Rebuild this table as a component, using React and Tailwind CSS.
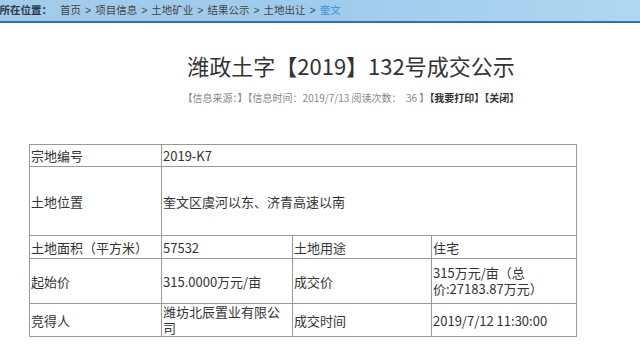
import React from 'react';

const crumbs = ['首页', '项目信息', '土地矿业', '结果公示', '土地出让'];

export default function App() {
  const cell = 'border border-[#999] px-[1px] align-middle text-left';
  return (
    <div className="w-[640px] h-[364px] overflow-hidden bg-white text-[#333]" style={{ fontFamily: '"Noto Sans CJK SC", "Noto Sans", sans-serif' }}>
      <div
        className="h-[23px] bg-gradient-to-r from-[#a3cbe9] via-[#9fcbec] to-[#b1d7f0] border-b-2 border-[#2d6fb8] flex items-center text-[10.5px] whitespace-nowrap"
        style={{ fontFamily: '"Liberation Sans", "Noto Sans CJK SC", sans-serif' }}
      >
        <span className="ml-[-11px] font-bold text-[#2b3a4d]">您所在位置：</span>
        <span className="ml-[8px] text-[#444] flex items-center">
          {crumbs.map((c) => (
            <React.Fragment key={c}>
              <span>{c}</span>
              <span className="mx-[4px]">&gt;</span>
            </React.Fragment>
          ))}
          <span className="text-[#3b8fd6]">奎文</span>
        </span>
      </div>

      <div className="pl-[62px] text-center">
        <h1 className="mt-[27px] text-[22px] leading-[30px] text-[#333]">潍政土字【2019】132号成交公示</h1>
        <div className="mt-[11px] text-[10px] leading-[14px] text-[#888] whitespace-nowrap">
          【信息来源：】【信息时间：2019/7/13 阅读次数：&nbsp; 36 】<span className="font-bold text-[#333]">【我要打印】【关闭】</span>
        </div>
      </div>

      <table className="ml-[29px] mt-[39px] border-collapse border border-[#999] text-[13px] leading-[15px] text-[#333]">
        <colgroup>
          <col className="w-[132px]" />
          <col className="w-[131px]" />
          <col className="w-[139px]" />
          <col className="w-[145px]" />
        </colgroup>
        <tbody>
          <tr className="h-[22px]">
            <td className={cell}>宗地编号</td>
            <td className={cell} colSpan={3}>2019-K7</td>
          </tr>
          <tr className="h-[69px]">
            <td className={cell}>土地位置</td>
            <td className={cell} colSpan={3}>奎文区虞河以东、济青高速以南</td>
          </tr>
          <tr className="h-[23px]">
            <td className={cell}>土地面积（平方米）</td>
            <td className={cell}>57532</td>
            <td className={cell}>土地用途</td>
            <td className={cell}>住宅</td>
          </tr>
          <tr className="h-[45px]">
            <td className={cell}>起始价</td>
            <td className={cell}>315.0000万元/亩</td>
            <td className={cell}>成交价</td>
            <td className={`${cell} leading-[16px]`}>315万元/亩（总<br />价:27183.87万元）</td>
          </tr>
          <tr className="h-[32px]">
            <td className={cell}>竞得人</td>
            <td className={`${cell} leading-[16px]`}>潍坊北辰置业有限公<br />司</td>
            <td className={cell}>成交时间</td>
            <td className={cell}>2019/7/12 11:30:00</td>
          </tr>
        </tbody>
      </table>
    </div>
  );
}
